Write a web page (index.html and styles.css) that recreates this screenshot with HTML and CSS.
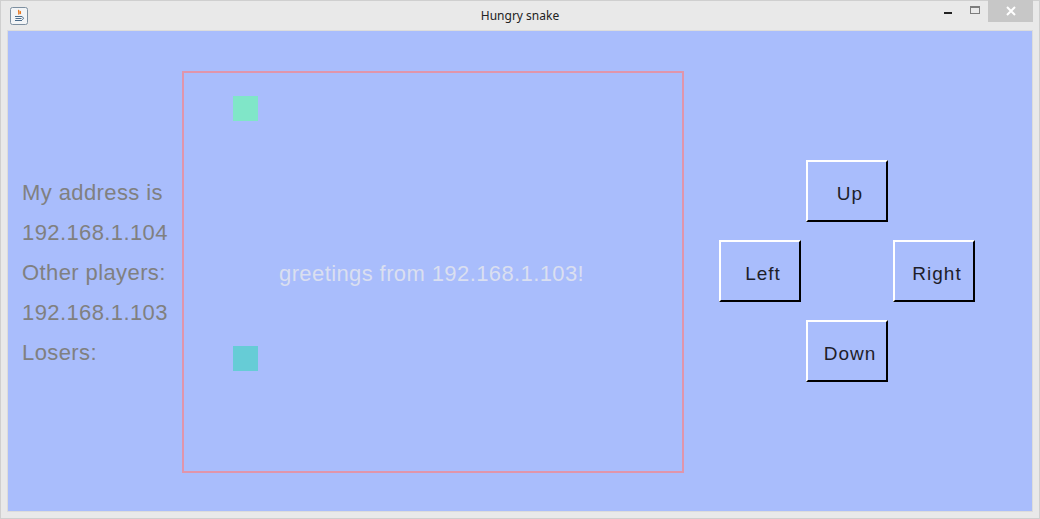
FILE: index.html
```html
<!DOCTYPE html>
<html>
<head>
<meta charset="utf-8">
<title>Hungry snake</title>
<link rel="stylesheet" href="styles.css">
</head>
<body>
<div class="window">
  <div class="titlebar">
    <svg class="appicon" width="18" height="18" viewBox="0 0 18 18">
      <rect x="0.5" y="0.5" width="17" height="17" rx="2" fill="#f2f4f6" stroke="#7d8fa0"/>
      <path d="M9 3 C7.5 4.5 10 5.5 8.5 7.5 M10.5 4 C9.8 5 11 5.6 10.2 7" stroke="#e8761c" stroke-width="1.3" fill="none"/>
      <path d="M5 9.5 H12 M5.5 11.5 H11.5 M5 13.5 H12 M12 10 C14 10 14 12.5 12 12.5" stroke="#4a6b8a" stroke-width="1" fill="none"/>
    </svg>
    <div class="title">Hungry snake</div>
    <div class="winbtns">
      <div class="wb min"><span class="dash"></span></div>
      <div class="wb max"><span class="box"></span></div>
      <div class="wb close">
        <svg width="12" height="10" viewBox="0 0 12 10"><path d="M2 1 L10 9 M10 1 L2 9" stroke="#fff" stroke-width="2"/></svg>
      </div>
    </div>
  </div>
  <div class="content">
    <div class="labels">
      <div>My address is</div>
      <div>192.168.1.104</div>
      <div>Other players:</div>
      <div>192.168.1.103</div>
      <div>Losers:</div>
    </div>
    <div class="board">
      <div class="cell cell-a"></div>
      <div class="cell cell-b"></div>
      <div class="greeting">greetings from 192.168.1.103!</div>
    </div>
    <div class="controls">
      <button class="btn up">Up</button>
      <button class="btn left">Left</button>
      <button class="btn right">Right</button>
      <button class="btn down">Down</button>
    </div>
  </div>
</div>
</body>
</html>
```
FILE: styles.css
```css
* { box-sizing: border-box; }
html, body { margin: 0; padding: 0; }
body { width: 1040px; height: 519px; overflow: hidden; background: #e9e9e9; }

.window {
  width: 1040px;
  height: 519px;
  background: #e9e9e9;
  border: 1px solid #cfcfcf;
  display: flex;
  flex-direction: column;
}

.titlebar {
  height: 29px;
  display: flex;
  align-items: flex-start;
  position: relative;
}
.appicon { margin: 6px 0 0 9px; }
.title {
  position: absolute;
  left: 0; right: 0; top: 7px;
  text-align: center;
  font: 12px "Noto Sans", "Open Sans", sans-serif;
  color: #222;
  line-height: 16px;
}
.winbtns {
  margin-left: auto;
  margin-top: -1px;
  display: flex;
  margin-right: 6px;
}
.wb { height: 22px; display: flex; align-items: center; justify-content: center; }
.min { width: 26px; }
.min .dash { width: 8px; height: 2px; background: #222; margin-top: 4px; }
.max { width: 27px; }
.max .box { width: 10px; height: 8px; border: 1px solid #7c7c7c; border-top-width: 2px; margin-top: -2px; }
.close { width: 45px; background: #c7c7c7; }

.content {
  margin: 0 6px 6px 6px;
  flex: 1;
  background: #a9bdfc;
  border: 1px solid #dcdcdc;
  display: flex;
  align-items: flex-start;
  font-family: "Liberation Sans", Arial, sans-serif;
}

.labels {
  width: 174px;
  padding-left: 14px;
  margin-top: 142px;
  font-size: 22px;
  letter-spacing: 0.4px;
  line-height: 40px;
  color: #808080;
  white-space: nowrap;
}

.board {
  width: 502px;
  height: 402px;
  margin-top: 40px;
  border: 2px solid #e095ab;
  position: relative;
}
.cell { position: absolute; width: 25px; height: 25px; }
.cell-a { left: 49px; top: 23px; background: #80e6c8; }
.cell-b { left: 49px; top: 273px; background: #66ccd6; }
.greeting {
  position: absolute;
  left: 95px;
  top: 181px;
  font-size: 22px;
  letter-spacing: 0.4px;
  line-height: 40px;
  color: #dadff0;
  white-space: nowrap;
}

.controls {
  margin-left: 35px;
  margin-top: 129px;
  display: grid;
  grid-template-columns: 82px 82px 82px;
  grid-template-rows: 62px 62px 62px;
  column-gap: 5px;
  row-gap: 18px;
}
.btn {
  background: #a9bdfc;
  border-style: solid;
  border-width: 2px;
  border-color: #ffffff #000000 #000000 #ffffff;
  font: 19px "Liberation Sans", Arial, sans-serif;
  letter-spacing: 1px;
  color: #1e1e2a;
  padding: 5px 0 0 6px;
  margin: 0;
  text-align: center;
}
.up { grid-column: 2; grid-row: 1; }
.left { grid-column: 1; grid-row: 2; }
.right { grid-column: 3; grid-row: 2; }
.down { grid-column: 2; grid-row: 3; }
```
